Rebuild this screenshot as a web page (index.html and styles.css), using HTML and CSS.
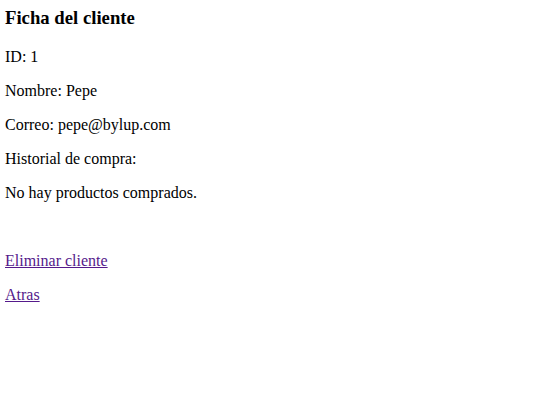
FILE: index.html
```html
<!DOCTYPE html>
<html lang="es">
<head>
<meta charset="utf-8">
<title>Ficha del cliente</title>
<link rel="stylesheet" href="styles.css">
</head>
<body>
<main class="page">
  <h3 class="title">Ficha del cliente</h3>
  <p class="line">ID: 1</p>
  <p class="line">Nombre: Pepe</p>
  <p class="line">Correo: pepe@bylup.com</p>
  <p class="line">Historial de compra:</p>
  <p class="line">No hay productos comprados.</p>
  <div class="spacer"></div>
  <p class="line"><a class="link" href="#eliminar">Eliminar cliente</a></p>
  <p class="line"><a class="link" href="#atras">Atras</a></p>
</main>
</body>
</html>
```

FILE: styles.css
```css
html, body {
  margin: 0;
  padding: 0;
  background: #ffffff;
}

body {
  font-family: "Liberation Serif", "Times New Roman", serif;
  font-size: 16px;
  color: #000000;
}

.page {
  padding: 7px 5px 0 5px;
}

.title {
  font-size: 18.72px;
  font-weight: bold;
  line-height: 22px;
  margin: 0 0 19px 0;
}

.line {
  line-height: 18px;
  margin: 16px 0;
}

.title + .line {
  margin-top: 0;
}

.spacer {
  height: 18px;
}

.link {
  color: #551a8b;
  text-decoration: underline;
}
```
